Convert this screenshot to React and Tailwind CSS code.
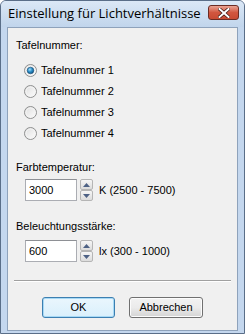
import React from "react";

const font = { fontFamily: '"Liberation Sans", Arial, sans-serif' };

function Radio({ checked }) {
  return (
    <svg width="13" height="13" viewBox="0 0 13 13" className="shrink-0">
      <defs>
        <linearGradient id="rg" x1="0" y1="0" x2="1" y2="1">
          <stop offset="0" stopColor="#dcdcdc" />
          <stop offset="1" stopColor="#ffffff" />
        </linearGradient>
        <radialGradient id="dot" cx="0.4" cy="0.35" r="0.7">
          <stop offset="0" stopColor="#a8e0fb" />
          <stop offset="0.5" stopColor="#2a8ec8" />
          <stop offset="1" stopColor="#0c4f7e" />
        </radialGradient>
      </defs>
      <circle cx="6.5" cy="6.5" r="6" fill="url(#rg)" stroke="#8e8f8f" strokeWidth="1" />
      <circle cx="6.5" cy="6.5" r="4.5" fill="none" stroke="#f4f4f4" strokeWidth="1" />
      {checked && <circle cx="6.5" cy="6.5" r="3.3" fill="url(#dot)" stroke="#1b4c74" strokeWidth="0.6" />}
    </svg>
  );
}

function Spinner() {
  return (
    <div className="flex flex-col w-[13px] h-[22px] gap-0">
      <div className="h-[11px] border border-[#b5b5b5] rounded-[2px] bg-gradient-to-b from-[#f6f6f6] to-[#dcdcdc] flex items-center justify-center">
        <svg width="7" height="4" viewBox="0 0 7 4"><path d="M0 4 L3.5 0 L7 4 Z" fill="#4d6185" /></svg>
      </div>
      <div className="h-[11px] border border-[#b5b5b5] rounded-[2px] bg-gradient-to-b from-[#f6f6f6] to-[#dcdcdc] flex items-center justify-center">
        <svg width="7" height="4" viewBox="0 0 7 4"><path d="M0 0 L3.5 4 L7 0 Z" fill="#4d6185" /></svg>
      </div>
    </div>
  );
}

function NumField({ value, unit }) {
  return (
    <div className="flex items-center ml-[17px]">
      <div className="w-[52px] h-[22px] bg-white border border-[#abadb3] border-t-[#8e9095] flex items-center pl-[3px] text-[11px] text-black">
        {value}
      </div>
      <div className="ml-[3px]"><Spinner /></div>
      <div className="ml-[6px] text-[11px] text-black">{unit}</div>
    </div>
  );
}

export default function App() {
  const rows = ["Tafelnummer 1", "Tafelnummer 2", "Tafelnummer 3", "Tafelnummer 4"];
  return (
    <div className="w-[245px] h-[334px] bg-[#c4d7ee] border border-[#5a6e88] rounded-t-[6px] flex flex-col overflow-hidden" style={font}>
      <div className="h-[26px] flex items-center justify-between pl-[7px] pr-[5px] bg-gradient-to-b from-[#dbe8f6] to-[#c1d5ec]">
        <span className="text-[13px] text-black" style={{ fontFamily: '"Open Sans", "Noto Sans", sans-serif' }}>
          Einstellung für Lichtverhältnisse
        </span>
        <div className="w-[31px] h-[15px] mb-[3px] rounded-[3px] border border-[#6b2c24] bg-gradient-to-b from-[#e8a293] via-[#d1563f] to-[#c84a32] flex items-center justify-center">
          <svg width="12" height="10" viewBox="0 0 12 10">
            <path d="M1.5 1 L10.5 9 M10.5 1 L1.5 9" stroke="#3c1510" strokeWidth="3.4" strokeLinecap="square" />
            <path d="M1.5 1 L10.5 9 M10.5 1 L1.5 9" stroke="#ffffff" strokeWidth="2" strokeLinecap="square" />
          </svg>
        </div>
      </div>
      <div className="flex-1 mx-[6px] mb-[2px] bg-[#f0f0f0] border border-[#8ea2bb] flex flex-col text-[11px] text-black">
        <div className="mt-[11px] ml-[8px] leading-[13px]">Tafelnummer:</div>
        <div className="mt-[8px] flex flex-col">
          {rows.map((r, i) => (
            <div key={r} className="h-[21px] flex items-center ml-[16px] gap-[4px]">
              <Radio checked={i === 0} />
              <span>{r}</span>
            </div>
          ))}
        </div>
        <div className="mt-[17px] ml-[8px] leading-[13px]">Farbtemperatur:</div>
        <div className="mt-[5px]"><NumField value="3000" unit="K (2500 - 7500)" /></div>
        <div className="mt-[19px] ml-[8px] leading-[13px]">Beleuchtungsstärke:</div>
        <div className="mt-[7px]"><NumField value="600" unit="lx (300 - 1000)" /></div>
        <div className="mt-[18px] mx-[6px] h-0 border-t border-[#a0a0a0] border-b border-b-white" />
        <div className="mt-[15px] flex gap-[14px] ml-[34px]">
          <button className="w-[73px] h-[21px] rounded-[3px] border border-[#3c7fb1] bg-gradient-to-b from-[#eaf6fd] to-[#d9f0fc] text-[11px] text-black shadow-[inset_0_0_0_1px_#a7d9f5]">OK</button>
          <button className="w-[74px] h-[21px] rounded-[3px] border border-[#707070] bg-gradient-to-b from-[#f2f2f2] via-[#ebebeb] to-[#d4d4d4] text-[11px] text-black shadow-[inset_0_0_0_1px_#fcfcfc]">Abbrechen</button>
        </div>
      </div>
    </div>
  );
}
